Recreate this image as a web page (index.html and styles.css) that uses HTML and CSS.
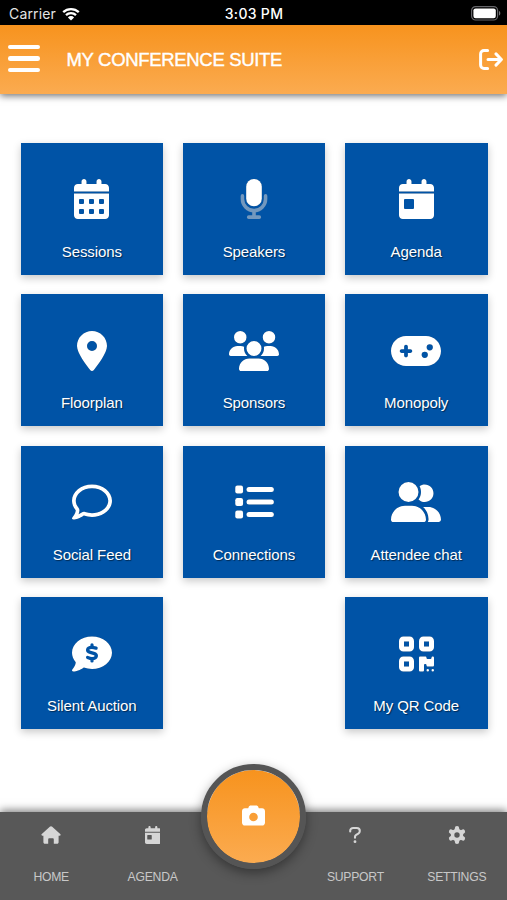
FILE: index.html
```html
<!DOCTYPE html>
<html lang="en">
<head>
    <meta charset="UTF-8">
    <meta name="viewport" content="width=device-width, initial-scale=1.0">
    <title>My Conference Suite</title>
    <link rel="stylesheet" href="styles.css">
</head>
<body>

<div class="status-bar">
    <div class="carrier">
        <span>Carrier</span>
        <svg class="wifi" viewBox="0 0 18 14">
            <path d="M1.2 5.2a11.2 11.2 0 0 1 15.6 0M4 8.2a7.2 7.2 0 0 1 10 0" fill="none" stroke="#fff" stroke-width="2.3"/>
            <path d="M9 13.6L5.9 10.4a4.4 4.4 0 0 1 6.2 0z"/>
        </svg>
    </div>
    <div class="time">3:03 PM</div>
    <div class="battery">
        <svg viewBox="0 0 30 15">
            <rect x=".6" y=".6" width="26" height="13.4" rx="4" fill="none" stroke="#66666a" stroke-width="1.2"/>
            <rect x="2.4" y="2.4" width="22.4" height="9.8" rx="2.2"/>
            <path d="M28 5v4.6c1.8-.6 1.8-4 0-4.6z" fill="#77777a"/>
        </svg>
    </div>
</div>

<header>
    <button class="menu-btn" aria-label="Menu"><span></span><span></span><span></span></button>
    <h1>MY CONFERENCE SUITE</h1>
    <svg class="logout" viewBox="0 0 24 21">
        <path d="M8.6 1.5H5a3.4 3.4 0 0 0-3.4 3.4v11.2A3.4 3.4 0 0 0 5 19.5h3.6M9 10.5h13M17 4.9l5.4 5.6-5.4 5.6"/>
    </svg>
</header>

<main class="grid">
    <a class="tile" href="#">
        <svg viewBox="0 0 448 512"><path d="M128 0c17.700 0 32 14.300 32 32V64H288V32c0-17.700 14.300-32 32-32s32 14.300 32 32V64h48c26.500 0 48 21.500 48 48v48H0V112C0 85.500 21.500 64 48 64H96V32c0-17.700 14.300-32 32-32zM0 186H448V464c0 26.500-21.500 48-48 48H48c-26.500 0-48-21.500-48-48V186zm64 86v32c0 8.800 7.200 16 16 16h32c8.800 0 16-7.200 16-16V272c0-8.800-7.200-16-16-16H80c-8.800 0-16 7.200-16 16zm128 0v32c0 8.800 7.200 16 16 16h32c8.800 0 16-7.200 16-16V272c0-8.800-7.200-16-16-16H208c-8.800 0-16 7.200-16 16zm144-16c-8.800 0-16 7.200-16 16v32c0 8.800 7.200 16 16 16h32c8.800 0 16-7.200 16-16V272c0-8.800-7.200-16-16-16H336zM64 400v32c0 8.800 7.200 16 16 16h32c8.800 0 16-7.200 16-16V400c0-8.800-7.200-16-16-16H80c-8.800 0-16 7.200-16 16zm144-16c-8.800 0-16 7.200-16 16v32c0 8.800 7.200 16 16 16h32c8.800 0 16-7.200 16-16V400c0-8.800-7.200-16-16-16H208zm112 16v32c0 8.800 7.200 16 16 16h32c8.800 0 16-7.200 16-16V400c0-8.800-7.200-16-16-16H336c-8.800 0-16 7.200-16 16z"/></svg>
        <span>Sessions</span>
    </a>
    <a class="tile" href="#">
        <svg viewBox="0 0 384 512">
            <path class="faded" d="M44 216v40a148 148 0 0 0 296 0v-40M192 404v80M124 488h136"/>
            <rect x="92" y="0" width="200" height="350" rx="98"/>
        </svg>
        <span>Speakers</span>
    </a>
    <a class="tile" href="#">
        <svg viewBox="0 0 448 512"><path d="M128 0c17.700 0 32 14.300 32 32V64H288V32c0-17.700 14.300-32 32-32s32 14.300 32 32V64h48c26.500 0 48 21.500 48 48v48H0V112C0 85.500 21.500 64 48 64H96V32c0-17.700 14.300-32 32-32zM0 186H448V464c0 26.500-21.500 48-48 48H48c-26.500 0-48-21.500-48-48V186zM80 256c-8.800 0-16 7.200-16 16v96c0 8.800 7.200 16 16 16h96c8.800 0 16-7.200 16-16V272c0-8.800-7.200-16-16-16H80z"/></svg>
        <span>Agenda</span>
    </a>

    <a class="tile" href="#">
        <svg viewBox="0 0 384 512"><path d="M215.700 499.200C267 435 384 279.400 384 192C384 86 298 0 192 0S0 86 0 192c0 87.400 117 243 168.300 307.200c12.300 15.300 35.100 15.300 47.400 0zM192 128a64 64 0 1 1 0 128 64 64 0 1 1 0-128z"/></svg>
        <span>Floorplan</span>
    </a>
    <a class="tile" href="#">
        <svg viewBox="0 0 640 512"><path d="M144 0a80 80 0 1 1 0 160A80 80 0 1 1 144 0zM512 0a80 80 0 1 1 0 160A80 80 0 1 1 512 0zM0 298.700C0 239.800 47.800 192 106.700 192h42.700c15.900 0 31 3.500 44.600 9.700c-1.300 7.200-1.900 14.700-1.900 22.300c0 38.200 16.800 72.500 43.300 96H21.300C9.600 320 0 310.400 0 298.700zM405.300 320h-.7c26.600-23.500 43.300-57.800 43.300-96c0-7.600-.7-15-1.900-22.300c13.600-6.300 28.700-9.700 44.600-9.700h42.700C592.200 192 640 239.800 640 298.700c0 11.800-9.600 21.300-21.300 21.300H405.300zM224 224a96 96 0 1 1 192 0 96 96 0 1 1-192 0zM128 485.300C128 411.700 187.700 352 261.300 352H378.700C452.300 352 512 411.700 512 485.300c0 14.700-11.900 26.700-26.700 26.700H154.700c-14.700 0-26.700-11.900-26.700-26.700z"/></svg>
        <span>Sponsors</span>
    </a>
    <a class="tile" href="#">
        <svg viewBox="0 0 640 512"><path d="M192 64C86 64 0 150 0 256S86 448 192 448H448c106 0 192-86 192-192s-86-192-192-192H192zM496 168a40 40 0 1 1 0 80 40 40 0 1 1 0-80zM392 304a40 40 0 1 1 80 0 40 40 0 1 1-80 0zM168 200c0-13.300 10.700-24 24-24s24 10.700 24 24v32h32c13.300 0 24 10.700 24 24s-10.700 24-24 24H216v32c0 13.300-10.700 24-24 24s-24-10.700-24-24V280H136c-13.300 0-24-10.700-24-24s10.700-24 24-24h32V200z"/></svg>
        <span>Monopoly</span>
    </a>

    <a class="tile" href="#">
        <svg viewBox="0 0 512 512"><path d="M123.600 391.300c12.900-9.400 29.600-11.800 44.600-6.400c26.500 9.600 56.200 15.100 87.800 15.100c124.700 0 208-80.500 208-160s-83.300-160-208-160S48 160.500 48 240c0 32 12.400 62.800 35.700 89.200c8.600 9.700 12.800 22.500 11.800 35.500c-1.400 18.100-5.700 34.700-11.300 49.400c17-7.900 31.100-16.700 39.400-22.700zM21.200 431.900c1.800-2.700 3.500-5.400 5.100-8.100c10-16.600 19.500-38.400 21.400-62.900C17.700 326.800 0 285.100 0 240C0 125.100 114.600 32 256 32s256 93.100 256 208s-114.600 208-256 208c-37.100 0-72.300-6.400-104.100-17.900c-11.900 8.700-31.300 20.600-54.300 30.600c-15.100 6.600-32.300 12.600-50.100 16.100c-10 2-20 3.300-31.600 3.300c-6.500 0-12.300-3.900-14.800-9.900c-2.500-6-1.100-12.800 3.400-17.400c6-6 11-13 16.700-22.900z"/></svg>
        <span>Social Feed</span>
    </a>
    <a class="tile" href="#">
        <svg viewBox="0 0 512 512">
            <rect x="16" y="46" width="100" height="100" rx="26"/>
            <rect x="16" y="206" width="100" height="100" rx="26"/>
            <rect x="16" y="366" width="100" height="100" rx="26"/>
            <rect x="160" y="64" width="350" height="64" rx="32"/>
            <rect x="160" y="224" width="350" height="64" rx="32"/>
            <rect x="160" y="384" width="350" height="64" rx="32"/>
        </svg>
        <span>Connections</span>
    </a>
    <a class="tile" href="#">
        <svg viewBox="0 0 640 512"><path d="M96 128a128 128 0 1 1 256 0A128 128 0 1 1 96 128zM0 482.300C0 383.800 79.800 304 178.300 304h91.400C368.200 304 448 383.800 448 482.300c0 16.400-13.300 29.700-29.700 29.700H29.700C13.300 512 0 498.700 0 482.300zM609.300 512H471.400c5.400-9.400 8.600-20.300 8.600-32v-8c0-60.700-27.100-115.200-69.800-151.800c2.400-.1 4.700-.2 7.100-.2h61.400C567.800 320 640 392.200 640 481.300c0 17-13.800 30.700-30.700 30.700zM432 256c-31 0-59-12.600-79.300-32.900C372.400 196.500 384 163.600 384 128c0-26.800-6.600-52.100-18.300-74.300C384.300 40.100 407.200 32 432 32c61.900 0 112 50.100 112 112s-50.100 112-112 112z"/></svg>
        <span>Attendee chat</span>
    </a>

    <a class="tile" href="#">
        <svg viewBox="0 0 512 512">
            <path d="M256 448c141.400 0 256-93.100 256-208S397.400 32 256 32S0 125.100 0 240c0 45.100 17.700 86.800 47.700 120.900c-1.900 24.500-11.400 46.300-21.400 62.900c-5.500 9.200-11.100 16.600-15.200 21.600l-6.500 7.400c-4.600 4.600-5.900 11.400-3.400 17.400c2.500 6 8.300 9.900 14.800 9.900c28.700 0 57.600-8.900 81.600-19.300c22.900-10 42.400-21.900 54.300-30.600c31.800 11.500 67 17.900 104.100 17.900z"/>
            <path class="dollar" d="M256 140v28M256 316v28M308 181c-22-7-38-11-54-11c-68 0-68 54-20 66l44 12c50 14 44 66-22 66c-18 0-38-7-56-14"/>
        </svg>
        <span>Silent Auction</span>
    </a>
    <a class="tile last" href="#">
        <svg viewBox="0 0 448 512">
            <g class="qr-box">
                <rect x="32" y="64" width="128" height="128" rx="24"/>
                <rect x="288" y="64" width="128" height="128" rx="24"/>
                <rect x="32" y="320" width="128" height="128" rx="24"/>
            </g>
            <path d="M256 304c0-8.800 7.200-16 16-16h64c8.800 0 16 7.200 16 16s7.200 16 16 16h32c8.800 0 16-7.200 16-16s7.200-16 16-16s16 7.200 16 16v96c0 8.800-7.200 16-16 16H368c-8.800 0-16-7.200-16-16s-7.200-16-16-16s-16 7.200-16 16v64c0 8.800-7.200 16-16 16H272c-8.800 0-16-7.200-16-16V304zM368 480a16 16 0 1 1 0-32 16 16 0 1 1 0 32zm64 0a16 16 0 1 1 0-32 16 16 0 1 1 0 32z"/>
        </svg>
        <span>My QR Code</span>
    </a>
</main>

<nav>
    <a href="#">
        <svg viewBox="0 0 20 18"><path d="M10 .3c.5 0 .9.200 1.200.5l8 7.100c.9.800.4 1.800-.6 1.800h-1v6.500c0 .9-.6 1.500-1.500 1.500h-3.300v-4.200c0-.7-.5-1.200-1.200-1.200H8.400c-.7 0-1.200.5-1.200 1.200v4.200H3.900c-.9 0-1.500-.6-1.500-1.500V9.700h-1c-1 0-1.500-1-.6-1.800l8-7.100c.3-.3.7-.5 1.200-.5z"/></svg>
        <span>HOME</span>
    </a>
    <a href="#">
        <svg viewBox="0 0 448 512"><path d="M128 0c17.700 0 32 14.300 32 32V64H288V32c0-17.700 14.300-32 32-32s32 14.300 32 32V64h48c26.500 0 48 21.500 48 48v48H0V112C0 85.500 21.500 64 48 64H96V32c0-17.700 14.300-32 32-32zM0 192H448V464c0 26.500-21.500 48-48 48H48c-26.500 0-48-21.500-48-48V192zM80 256c-8.800 0-16 7.200-16 16v96c0 8.800 7.200 16 16 16h96c8.800 0 16-7.200 16-16V272c0-8.800-7.200-16-16-16H80z"/></svg>
        <span>AGENDA</span>
    </a>
    <div class="camera-slot">
        <button class="camera-btn" aria-label="Camera">
            <svg viewBox="0 0 512 512"><path d="M149.100 64.800L138.700 96H64C28.700 96 0 124.700 0 160V416c0 35.300 28.700 64 64 64H448c35.300 0 64-28.700 64-64V160c0-35.300-28.700-64-64-64H373.300L362.900 64.800C356.400 45.200 338.100 32 317.400 32H194.600c-20.700 0-39 13.200-45.500 32.800zM256 192a96 96 0 1 1 0 192 96 96 0 1 1 0-192z"/></svg>
        </button>
    </div>
    <a href="#">
        <svg viewBox="0 0 12 18">
            <path class="question" d="M1.200 5.500V5c0-1.800 1.300-3 3-3h3.600c1.700 0 3 1.300 3 3 0 1.200-.5 2-1.500 2.600L7.200 8.900c-.8.500-1.200 1-1.200 1.900v.9"/>
            <circle cx="6" cy="15.700" r="1.400"/>
        </svg>
        <span>SUPPORT</span>
    </a>
    <a href="#">
        <svg viewBox="0 0 18 18">
            <path class="gear-teeth" d="M9 2.200v13.600M3.100 5.600l11.800 6.800M3.100 12.400l11.800-6.800"/>
            <circle cx="9" cy="9" r="6.200"/>
            <circle class="gear-hole" cx="9" cy="9" r="2.700"/>
        </svg>
        <span>SETTINGS</span>
    </a>
</nav>

</body>
</html>
```
FILE: styles.css
```css
* {
    box-sizing: border-box;
}
body {
    font-family: 'Liberation Sans', Arial, sans-serif;
    background-color: #fff;
    margin: 0;
    height: 900px;
    display: flex;
    flex-direction: column;
    overflow: hidden;
}
a {
    text-decoration: none;
}
button {
    border: none;
    background: none;
    padding: 0;
}
svg {
    display: block;
    fill: #fff;
    fill-rule: evenodd;
}

/* Status bar */
.status-bar {
    background-color: #000;
    color: #fff;
    height: 25px;
    padding: 2px 6px 0 9px;
    display: grid;
    grid-template-columns: 1fr auto 1fr;
    align-items: center;
    font-family: Inter, sans-serif;
    font-size: 14px;
    line-height: 22px;
}
.carrier {
    display: flex;
    align-items: center;
    gap: 6px;
    color: #e4e4e4;
    letter-spacing: 0.15px;
}
.wifi {
    width: 18px;
    height: 14px;
}
.time {
    font-weight: 500;
    letter-spacing: 0.3px;
    padding-right: 2px;
}
.battery svg {
    width: 30px;
    height: 15px;
    margin-left: auto;
}

/* Header */
header {
    height: 69px;
    flex-shrink: 0;
    display: flex;
    align-items: center;
    padding: 0 4px 2px 7.5px;
    background: linear-gradient(#f7931e, #fbab50);
    box-shadow: 0 2px 7px rgba(0, 0, 0, 0.55);
}
.menu-btn {
    width: 32px;
    display: flex;
    flex-direction: column;
    gap: 7px;
}
.menu-btn span {
    height: 4.6px;
    border-radius: 2.3px;
    background-color: #fff;
}
h1 {
    flex: 1;
    margin: 2px 0 0 27px;
    font-size: 18.5px;
    font-weight: normal;
    letter-spacing: -0.32px;
    color: #fff;
    -webkit-text-stroke: 0.4px #fff;
}
.logout {
    width: 24px;
    height: 21px;
    margin-top: 2px;
    fill: none;
    stroke: #fff;
    stroke-width: 3;
    stroke-linecap: round;
    stroke-linejoin: round;
}

/* Tiles */
.grid {
    display: grid;
    grid-template-columns: repeat(3, 1fr);
    grid-auto-rows: 132px;
    gap: 19.5px;
    padding: 48.5px 19.5px 0 20.5px;
}
.tile {
    background-color: #0053a6;
    color: #fff;
    padding-top: 36.5px;
    display: flex;
    flex-direction: column;
    align-items: center;
    gap: 23.5px;
    font-size: 15px;
    line-height: 18px;
    letter-spacing: -0.1px;
    text-shadow: 1px 1px 1px rgba(0, 0, 0, 0.5);
    box-shadow: 0 3px 8px rgba(0, 0, 0, 0.22);
}
.tile.last {
    grid-column: 3;
}
.tile svg {
    height: 40px;
    filter: drop-shadow(0.5px 0.5px 0.5px rgba(0, 0, 0, 0.4));
}
.faded {
    fill: none;
    stroke: #fff;
    stroke-width: 46;
    stroke-linecap: round;
    opacity: 0.45;
}
.dollar {
    fill: none;
    stroke: #0053a6;
    stroke-width: 42;
    stroke-linecap: round;
}
.qr-box {
    fill: none;
    stroke: #fff;
    stroke-width: 64;
}

/* Bottom navigation */
nav {
    height: 88px;
    margin-top: auto;
    display: grid;
    grid-template-columns: repeat(5, 1fr);
    background-color: #585858;
    box-shadow: 0 -2px 8px rgba(0, 0, 0, 0.5);
}
nav a {
    display: flex;
    flex-direction: column;
    align-items: center;
    gap: 26px;
    padding: 14px 0 0 1px;
    font-size: 12.2px;
    line-height: 15px;
    letter-spacing: -0.25px;
    color: #c8c8c8;
}
nav a svg {
    height: 18px;
    fill: #d6d6d6;
}
.camera-slot {
    position: relative;
}
.camera-btn {
    position: absolute;
    left: 50%;
    top: -48.5px;
    width: 105px;
    height: 105px;
    margin-left: -52px;
    border: 6px solid #555;
    border-radius: 50%;
    display: flex;
    align-items: center;
    justify-content: center;
    background: linear-gradient(#f7931e, #fbab50) padding-box;
    box-shadow: 0 4px 12px rgba(0, 0, 0, 0.4);
}
.camera-btn svg {
    width: 23px;
    margin-top: -2px;
}
.question {
    fill: none;
    stroke: #d6d6d6;
    stroke-width: 2.1;
    stroke-linecap: round;
}
.gear-teeth {
    stroke: #d6d6d6;
    stroke-width: 4.4;
    stroke-linecap: round;
}
.gear-hole {
    fill: #585858;
}
```
